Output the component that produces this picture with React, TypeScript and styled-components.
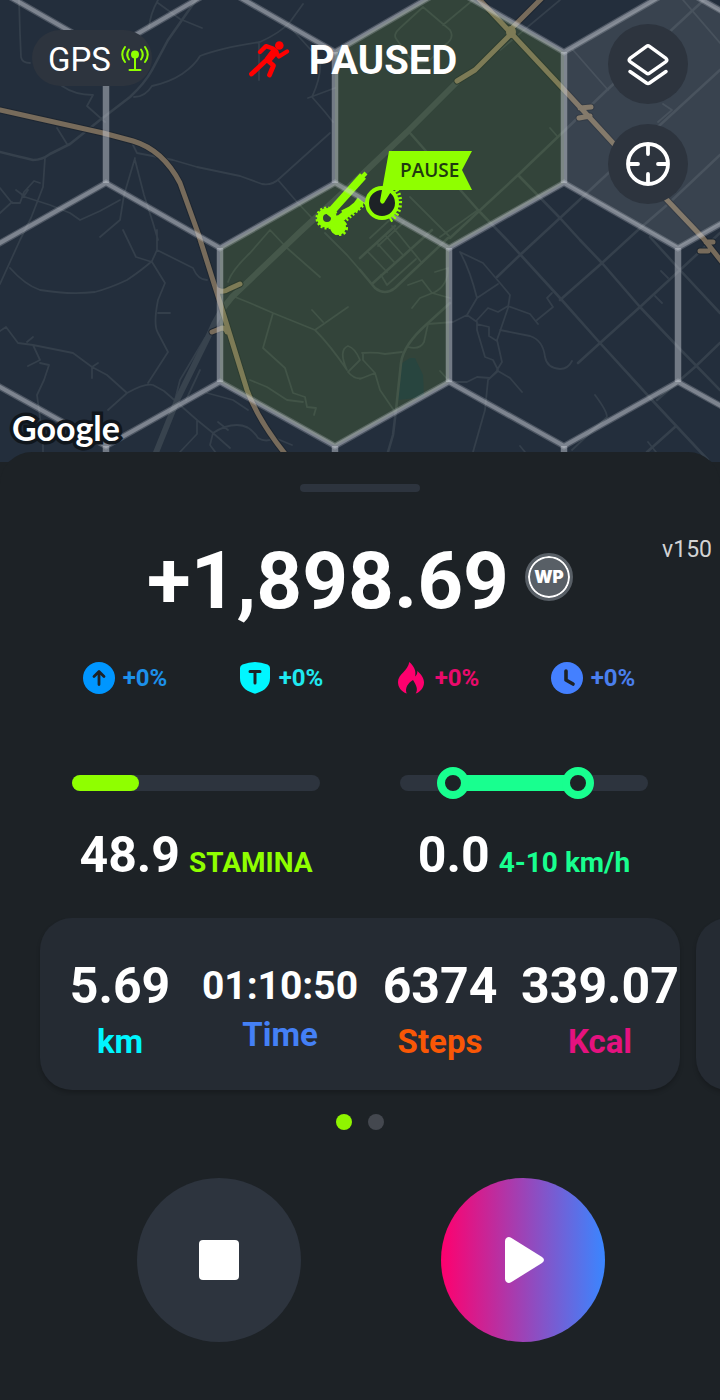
import { useState } from 'react';
import styled, { createGlobalStyle } from 'styled-components';

const HEX_SLOPES =
  'M-9 -14L106 52L220 -14L335 52L449 -14L564 52L678 -14L793 52' +
  'M-124 183L-9 248L106 183L220 248L335 183L449 248L564 183L678 248L793 183' +
  'M-124 446L-9 382L106 446L220 382L335 446L449 382L564 446L678 382L793 446';

const HEX_SIDES =
  'M106 52V183M335 52V183M564 52V183' +
  'M220 248V382M449 248V382M678 248V382' +
  'M106 446V480M335 446V480M564 446V480';

const MINOR_ROADS = [
  'M19 0L20 33L21 57Q22 63 30 63',
  'M45 158L43 187L31 218L20 240L10 262L0 284',
  'M158 0Q150 14 149 28M158 3L180 19L202 28',
  'M134 97Q145 97 152 86Q170 82 182 74Q195 65 200 56Q220 48 260 42Q280 33 290 22L303 4',
  'M290 27L320 60Q322 75 312 97L325 112L333 122M259 42V80M308 98L335 88',
  'M62 86Q75 95 93 95L87 106L105 122M57 128L67 144',
  'M133 145L137 153L173 160L197 167L240 176L262 184Q272 186 280 178L330 133',
  'M278 180L297 202L312 218',
  'M135 158L124 195L120 220L100 237M135 160L144 195L153 223L158 240',
  'M0 188L12 203L20 203L24 192L34 181L40 183M16 190L24 196L28 190',
  'M22 196L50 205L70 213L80 220L100 211L120 200M0 213L12 202',
  'M10 268Q25 285 40 290Q70 295 95 292Q110 288 127 280Q142 270 152 261',
  'M123 230L136 257L152 262L165 283L158 300Q153 325 158 333L168 352L148 383',
  'M157 230V250L152 261M157 250L177 260L193 268Q198 280 207 280M158 313H170',
  'M0 331L6 327L18 343L33 345L73 353L92 367L107 375L127 393M92 378V367L98 363',
  'M33 345L40 360L28 366M40 363L49 365L44 380L37 395L43 440V455M27 342L33 337',
  'M108 410L127 393Q145 383 153 385L164 391L180 405L197 420L213 433L230 448',
  'M197 420V434L180 452M213 433Q225 425 237 425Q250 425 258 438Q266 443 275 438L292 445',
  'M213 433L210 445L216 453M218 422L228 430M205 338L180 380L175 400M200 370L186 400',
  'M207 393L233 400L248 410',
  'M235 297L250 303L273 313L315 330Q330 345 347 370',
  'M273 313L263 348L285 368L293 393L305 397L307 407L316 408L314 415',
  'M250 380L267 387L287 400L303 402M315 330L348 307M312 310L323 322',
  'M228 282Q232 270 250 253L270 230L287 248L320 277M325 233L347 255L360 270',
  'M347 370Q338 350 348 346Q355 348 360 360L348 372Q355 380 362 378',
  'M408 285L422 280L432 293L450 298M412 308L420 298L435 292Q448 285 448 268L435 272',
  'M428 324L453 322L467 315L477 322V330L485 357L493 360L498 370L488 380L485 410L473 452',
  'M460 252Q470 270 477 298L467 315M477 298L498 284',
  'M460 252L483 263L500 283L510 295L508 308L497 340L502 362L497 370',
  'M477 320L488 308L498 312L508 306L530 314L538 324M477 324L489 327V336L497 341',
  'M500 330L530 336Q543 340 545 357Q547 368 560 369Q568 369 572 361',
  'M440 371L450 382L467 382L477 377L490 378L498 371L510 378L522 392',
  'M362 353Q375 352 385 354L402 352M363 353V360L375 373L380 390L395 412M360 379L375 373',
  'M572 450L607 417Q607 411 595 395M537 320L553 307L547 298L552 293',
  'M428 324L424 342Q420 350 408 347M550 128L557 136M661 271L668 278M655 296L662 303',
  'M423 7L450 30Q455 38 445 45L430 60Q420 66 410 58L397 40Q392 35 400 28L423 7M443 25L473 0',
  'M410 197L450 237M440 237L478 210M573 50L608 90M683 0L720 43M663 104L672 110L658 122',
  'M368 252L387 272M377 243L395 263M385 235L403 255M392 226L422 263M381 275L387 285L416 259',
  'M370 238L395 215M378 246L404 222M648 442L656 452M520 446L525 452M500 50L560 0',
];

const GRID_ROADS = [
  'M0 152Q20 157 33 160Q42 160 50 154L70 144L100 120L130 97Q145 83 152 70L168 40L196 0',
  'M410 133L478 210L507 240L560 298L600 343L652 400L708 460',
  'M518 175L560 218L580 240L602 263L640 307L678 347L720 390',
  'M650 237L680 270L720 313',
  'M450 238L518 175L607 90L693 10L704 0',
  'M497 277L520 255L560 218L660 125L720 70',
  'M560 300L602 263L638 230L667 205L720 155',
  'M578 363L600 343L640 307L680 270L720 233M657 400L695 367L720 343M647 452L675 427',
  'M360 270L375 288Q385 296 395 288L448 238M373 283L432 230M360 258L395 226',
  'M450 303L428 323Q403 345 401 363L396 410L393 435L388 452',
];

const HIGHWAYS = [
  'M0 110L103 133L133 141Q163 150 180 183Q188 205 198 233L217 293L247 390Q258 420 286 455',
  'M478 -2L510 32L567 93L613 143L667 200L703 238L722 262',
  'M543 -3L510 30M510 35L475 70L457 81M580 108L591 107M579 118L590 116M700 251H708M706 242H713',
  'M218 290Q223 293 229 289L240 284M212 332L222 328Q226 328 227 332',
];

const MapArt = () => (
  <MapSvg viewBox="0 0 720 462" preserveAspectRatio="xMidYMin slice" aria-hidden="true">
    <rect x="-400" y="-20" width="1600" height="520" fill="#232e3c" />
    <g fill="none" strokeLinecap="round" strokeLinejoin="round">
      <path d="M402 363L410 358H415L423 375L424 397L398 400Z" fill="#172f42" />
      <path d={MINOR_ROADS.join('')} stroke="#343f4b" strokeWidth="1.8" />
      <path d={GRID_ROADS.join('')} stroke="#35404c" strokeWidth="2.6" />
      <path
        d="M155 455L178 398L210 333Q218 313 232 297L300 232L350 186L407 132L457 82"
        stroke="#38434e"
        strokeWidth="6"
      />
      <path d={HIGHWAYS.join('')} stroke="#1d2631" strokeWidth="7" />
      <path d={HIGHWAYS.join('')} stroke="#776b5b" strokeWidth="5" />
      <ellipse cx="511" cy="32" rx="5" ry="6" fill="#776b5b" />
    </g>
    <g fill="rgba(180, 255, 50, 0.11)">
      <path d="M335 52L449 -14L564 52V183L449 248L335 183Z" />
      <path d="M220 248L335 183L449 248V382L335 446L220 382Z" />
    </g>
    <path d="M564 52L678 -14L793 52V183L678 248L564 183Z" fill="rgba(255, 255, 255, 0.1)" />
    <g fill="none" stroke="#8fff00">
      <path d="M363 176L328 215" strokeWidth="8" />
      <path d="M366 173L327 214" strokeWidth="4" />
      <path d="M361 202L331 226M361 200L355 208L343 214" strokeWidth="8" />
      <path d="M366 203L342 224" strokeWidth="3" strokeDasharray="2 2" />
      <circle cx="327" cy="218" r="7" strokeWidth="6" />
      <circle cx="327" cy="218" r="10" strokeWidth="3" strokeDasharray="2 2" />
      <circle cx="338" cy="227" r="4" strokeWidth="8" />
      <circle cx="340" cy="228" r="6" strokeWidth="4" strokeDasharray="2 2" />
    </g>
    <g fill="none" stroke="#cdd0d8">
      <path d={HEX_SLOPES} strokeWidth="6.5" opacity="0.25" />
      <path d={HEX_SLOPES} strokeWidth="4" opacity="0.38" />
      <path d={HEX_SIDES} strokeWidth="6.5" opacity="0.47" />
    </g>
    <path
      d="M396 190Q401 197 399 208Q397 216 390 220"
      fill="none"
      stroke="#8fff00"
      strokeWidth="5"
      strokeDasharray="2 2"
    />
    <circle cx="382" cy="203" r="15" fill="#1d2226" stroke="#8fff00" strokeWidth="4" />
    <path d="M389 151H472L462 170L472 190H392L384 203Q381 205 380 201L382 190Z" fill="#8fff00" />
    <FlagText x="400" y="177">
      PAUSE
    </FlagText>
  </MapSvg>
);

const AntennaIcon = () => (
  <svg width="28" height="28" viewBox="0 0 28 28" fill="none" stroke="#8fff00" strokeWidth="2">
    <circle cx="14" cy="9.5" r="4" fill="#8fff00" stroke="none" />
    <path d="M14 10V25M8.5 25H19.5" strokeLinecap="round" />
    <path d="M8 4.5Q4.5 9.5 8 14.5M20 4.5Q23.5 9.5 20 14.5" strokeLinecap="round" />
    <path d="M4 2Q-1.5 9.5 4 17M24 2Q29.5 9.5 24 17" strokeLinecap="round" />
  </svg>
);

const RunnerIcon = () => (
  <svg width="42" height="38" viewBox="0 0 42 38" fill="none" stroke="#ff0000" strokeWidth="4.8">
    <circle cx="30.3" cy="4.5" r="4.3" fill="#ff0000" stroke="none" />
    <g strokeLinecap="round" strokeLinejoin="round">
      <path d="M11 11L17 5.2L24 7.5L30 15.5L38 10.5" strokeWidth="4.4" />
      <path d="M25 9L17.5 19L2.5 33" />
      <path d="M18 19L24.5 24.5L20.5 34" />
      <path d="M26 11L20 18" strokeWidth="7" />
    </g>
  </svg>
);

const LayersIcon = () => (
  <svg width="44" height="44" viewBox="0 0 44 44" fill="none" stroke="#fff" strokeWidth="3.4">
    <g strokeLinecap="round" strokeLinejoin="round">
      <path d="M20.5 4.3Q22 3.2 23.5 4.3L40 16.4Q41.6 18 40 19.6L23.5 31.2Q22 32.4 20.5 31.2L4 19.6Q2.4 18 4 16.4Z" />
      <path d="M4 29.5L20.5 41Q22 42 23.5 41L40 29.5" />
    </g>
  </svg>
);

const CrosshairIcon = () => (
  <svg width="44" height="44" viewBox="0 0 44 44" fill="none" stroke="#fff" strokeWidth="3.8">
    <circle cx="22" cy="22" r="20" />
    <path d="M22 3V12M22 32V41M3 22H12M32 22H41" strokeLinecap="round" />
  </svg>
);

const ArrowIcon = () => (
  <svg width="32" height="32" viewBox="0 0 32 32">
    <circle cx="16" cy="16" r="16" fill="#0096ff" />
    <path
      d="M16 22.5V10M11 14.5L16 9.5L21 14.5"
      fill="none"
      stroke="#1d2226"
      strokeWidth="2.8"
      strokeLinecap="round"
      strokeLinejoin="round"
    />
  </svg>
);

const ShieldIcon = () => (
  <svg width="32" height="32" viewBox="0 0 32 32">
    <path
      d="M16 0Q22 .3 28.5 2.5Q31 3.5 31 6V16Q31 27 17.5 31.3Q16 32 14.5 31.3Q1 27 1 16V6Q1 3.5 3.5 2.5Q10 .3 16 0Z"
      fill="#00f6ff"
    />
    <path
      d="M11 9.5H21M16 9.5V21"
      fill="none"
      stroke="#1d2226"
      strokeWidth="3"
      strokeLinecap="round"
    />
  </svg>
);

const FlameIcon = () => (
  <svg width="32" height="32" viewBox="0 0 32 32">
    <path
      d="M14.3 0C19 4 21.5 9 20 14.5C22 13 22.5 11 22.3 9C26 12 29 16 29 20.5C29 26 25 30 20.7 31.6C23.5 27 21 23 18 18C13 21 9.5 26 11.7 31.6C6 29.5 3 25 3 20C3 12 13 9 14.3 0Z"
      fill="#ff006e"
    />
  </svg>
);

const ClockIcon = () => (
  <svg width="32" height="32" viewBox="0 0 32 32">
    <circle cx="16" cy="16" r="16" fill="#4480ff" />
    <path
      d="M15 9V18L22 22"
      fill="none"
      stroke="#1d2226"
      strokeWidth="3.6"
      strokeLinecap="round"
      strokeLinejoin="round"
    />
  </svg>
);

const BOOSTS = [
  { name: 'Level boost', color: '#1c90ea', Icon: ArrowIcon },
  { name: 'Token boost', color: '#1fe9f0', Icon: ShieldIcon },
  { name: 'Energy boost', color: '#ea0a6c', Icon: FlameIcon },
  { name: 'Time boost', color: '#4a7fee', Icon: ClockIcon },
];

const STATS = [
  { label: 'km', value: '5.69', color: '#00f6ff' },
  { label: 'Time', value: '01:10:50', color: '#4480f6', small: true },
  { label: 'Steps', value: '6374', color: '#f95706' },
  { label: 'Kcal', value: '339.07', color: '#e5127f' },
];

const SPEED_MIN = 2.2;
const SPEED_MAX = 12.6;

const SpeedRange = () => {
  const [low, setLow] = useState(4);
  const [high, setHigh] = useState(10);

  const toPercent = (speed: number) => ((speed - SPEED_MIN) / (SPEED_MAX - SPEED_MIN)) * 100;

  return (
    <Gauge>
      <TrackBox>
        <Track>
          <RangeInset>
            <RangeFill
              style={{
                marginLeft: `${toPercent(low)}%`,
                width: `${toPercent(high) - toPercent(low)}%`,
              }}
            />
          </RangeInset>
        </Track>
        <RangeInput
          type="range"
          aria-label="Lowest speed"
          min={SPEED_MIN}
          max={SPEED_MAX}
          step={0.1}
          value={low}
          onChange={(e) => setLow(Math.min(Number(e.target.value), high))}
        />
        <RangeInput
          type="range"
          aria-label="Highest speed"
          min={SPEED_MIN}
          max={SPEED_MAX}
          step={0.1}
          value={high}
          onChange={(e) => setHigh(Math.max(Number(e.target.value), low))}
        />
      </TrackBox>
      <GaugeText>
        <BigValue>0.0</BigValue>
        <GaugeUnit color="#18ff8f">
          {low}-{high} km/h
        </GaugeUnit>
      </GaugeText>
    </Gauge>
  );
};

const App = () => {
  return (
    <>
      <GlobalStyle />
      <MapSection>
        <MapArt />
        <Header>
          <GpsPill>
            GPS
            <AntennaIcon />
          </GpsPill>
          <Title>
            <RunnerIcon />
            PAUSED
          </Title>
          <MapButtons>
            <MapButton aria-label="Map layers">
              <LayersIcon />
            </MapButton>
            <MapButton aria-label="My location">
              <CrosshairIcon />
            </MapButton>
          </MapButtons>
        </Header>
        <MapBrand>Google</MapBrand>
      </MapSection>
      <Sheet>
        <SheetHandle />
        <ScoreRow>
          <Score>
            +1,898.69
            <Badge>WP</Badge>
          </Score>
          <Version>v150</Version>
        </ScoreRow>
        <BoostRow>
          {BOOSTS.map(({ name, color, Icon }) => (
            <Boost key={name} color={color} aria-label={name}>
              <Icon />
              +0%
            </Boost>
          ))}
        </BoostRow>
        <GaugeRow>
          <Gauge>
            <TrackBox>
              <Track role="progressbar" aria-label="Stamina" aria-valuenow={27}>
                <StaminaFill style={{ width: '27%' }} />
              </Track>
            </TrackBox>
            <GaugeText>
              <BigValue>48.9</BigValue>
              <GaugeUnit color="#8fff00">STAMINA</GaugeUnit>
            </GaugeText>
          </Gauge>
          <SpeedRange />
        </GaugeRow>
        <Carousel>
          <StatCard>
            {STATS.map(({ label, value, color, small }) => (
              <Stat key={label}>
                <StatValue small={small}>{value}</StatValue>
                <StatLabel color={color}>{label}</StatLabel>
              </Stat>
            ))}
          </StatCard>
          <StatCard />
        </Carousel>
        <Dots>
          <Dot active aria-label="Page 1" />
          <Dot aria-label="Page 2" />
        </Dots>
        <Controls>
          <RoundButton aria-label="Stop">
            <svg width="40" height="40" viewBox="0 0 40 40">
              <rect width="40" height="40" rx="4" fill="#fff" />
            </svg>
          </RoundButton>
          <RoundButton primary aria-label="Resume">
            <svg width="46" height="46" viewBox="0 0 46 46">
              <path
                d="M5 4Q5 1.5 7 .5Q9 -.5 11.5 1L42 20Q44 21.5 44 23Q44 24.5 42 26L11.5 45Q9 46.5 7 45.5Q5 44.5 5 42Z"
                fill="#fff"
              />
            </svg>
          </RoundButton>
        </Controls>
      </Sheet>
    </>
  );
};

export default App;

const GlobalStyle = createGlobalStyle`
  * {
    box-sizing: border-box;
  }

  body {
    margin: 0;
    background-color: #1d2226;
    color: #fff;
    font-family: Roboto, sans-serif;
  }

  button {
    padding: 0;
    border: none;
    font: inherit;
    color: inherit;
    cursor: pointer;
  }

  svg {
    display: block;
    flex: none;
  }
`;

const MapSection = styled.section`
  position: relative;
  min-height: 462px;
  display: flex;
  flex-direction: column;
  justify-content: space-between;
  overflow: hidden;
`;

const MapSvg = styled.svg`
  position: absolute;
  inset: 0;
  width: 100%;
  height: 100%;
`;

const FlagText = styled.text`
  font-family: 'Open Sans', sans-serif;
  font-size: 19px;
  font-weight: 600;
  fill: #1f3a10;
`;

const Header = styled.header`
  position: relative;
  display: grid;
  grid-template-columns: 1fr auto 1fr;
  align-items: start;
  padding: 24px 32px;
`;

const GpsPill = styled.div`
  justify-self: start;
  display: flex;
  align-items: center;
  gap: 10px;
  height: 56px;
  margin-top: 6px;
  padding: 2px 3px 0 16px;
  border-radius: 28px;
  background-color: #2d343e;
  font-size: 33px;
`;

const Title = styled.h1`
  display: flex;
  align-items: center;
  gap: 18px;
  height: 72px;
  margin: 0;
  padding-right: 14px;
  font-size: 40px;
  font-weight: 700;
`;

const MapButtons = styled.div`
  justify-self: end;
  display: flex;
  flex-direction: column;
  gap: 20px;
`;

const MapButton = styled.button`
  display: flex;
  align-items: center;
  justify-content: center;
  width: 80px;
  height: 80px;
  border-radius: 50%;
  background-color: #2d343e;
`;

const MapBrand = styled.span`
  position: relative;
  padding: 0 12px 12px;
  font-family: Lato, sans-serif;
  font-size: 34px;
  font-weight: 700;
  line-height: 44px;
  -webkit-text-stroke: 7px #10161c;
  paint-order: stroke fill;
`;

const Sheet = styled.main`
  position: relative;
  margin-top: -10px;
  padding: 32px 0 58px;
  border-radius: 32px 32px 0 0;
  background-color: #1d2226;
`;

const SheetHandle = styled.div`
  width: 120px;
  height: 8px;
  margin: 0 auto;
  border-radius: 4px;
  background-color: #2d343e;
`;

const ScoreRow = styled.div`
  display: grid;
  grid-template-columns: 1fr auto 1fr;
  margin-top: 42px;
  padding: 0 8px;
`;

const Score = styled.div`
  grid-column: 2;
  display: flex;
  align-items: center;
  gap: 16px;
  font-size: 80px;
  font-weight: 700;
  line-height: 94px;
`;

const Badge = styled.span`
  display: flex;
  align-items: center;
  justify-content: center;
  width: 48px;
  height: 48px;
  margin-bottom: 8px;
  border: 3px solid #585f66;
  border-radius: 50%;
  background-color: #585f66;
  box-shadow: inset 0 0 0 2px #fff;
  font-family: Inter, sans-serif;
  font-size: 17px;
  font-weight: 900;
  line-height: 20px;
`;

const Version = styled.span`
  justify-self: end;
  color: #d2d3d4;
  font-size: 23px;
  line-height: 32px;
`;

const BoostRow = styled.ul`
  display: grid;
  grid-template-columns: repeat(4, 1fr);
  margin: 34px 0 0;
  padding: 0 49px 0 47px;
  list-style: none;
`;

const Boost = styled.li<{ color: string }>`
  display: flex;
  align-items: center;
  justify-content: center;
  gap: 8px;
  color: ${(props) => props.color};
  font-size: 24px;
  font-weight: 700;
  line-height: 32px;
`;

const GaugeRow = styled.div`
  display: grid;
  grid-template-columns: 1fr 1fr;
  gap: 80px;
  margin-top: 73px;
  padding: 0 72px;
`;

const Gauge = styled.div`
  display: flex;
  flex-direction: column;
  gap: 27px;
`;

const TrackBox = styled.div`
  position: relative;
  display: flex;
  align-items: center;
  height: 32px;
`;

const Track = styled.div`
  width: 100%;
  height: 16px;
  border-radius: 8px;
  background-color: #2d343e;
`;

const StaminaFill = styled.div`
  height: 16px;
  border-radius: 8px;
  background-color: #8fff00;
`;

const RangeInset = styled.div`
  padding: 0 16px;
`;

const RangeFill = styled.div`
  height: 16px;
  background-color: #18ff8f;
`;

const RangeInput = styled.input`
  position: absolute;
  inset: 0;
  width: 100%;
  height: 32px;
  margin: 0;
  appearance: none;
  background: transparent;
  pointer-events: none;

  &::-webkit-slider-thumb {
    appearance: none;
    width: 32px;
    height: 32px;
    border: 8px solid #18ff8f;
    border-radius: 50%;
    background-color: #1d2226;
    pointer-events: auto;
  }
`;

const GaugeText = styled.div`
  display: flex;
  align-items: baseline;
  justify-content: center;
  gap: 9px;
`;

const BigValue = styled.span`
  font-size: 50px;
  font-weight: 700;
  line-height: 58px;
`;

const GaugeUnit = styled.span<{ color: string }>`
  color: ${(props) => props.color};
  font-size: 28px;
  font-weight: 700;
`;

const Carousel = styled.div`
  display: flex;
  gap: 16px;
  margin-top: 34px;
  margin-bottom: -6px;
  padding: 0 40px 6px;
  overflow: hidden;
`;

const StatCard = styled.div`
  flex: 0 0 100%;
  display: grid;
  grid-template-columns: repeat(4, minmax(0, 1fr));
  align-items: center;
  padding: 39px 0 29px;
  border-radius: 32px;
  background-color: #252b33;
  box-shadow: 0 3px 4px rgba(0, 0, 0, 0.2);
`;

const Stat = styled.div`
  display: flex;
  flex-direction: column;
  align-items: center;
  gap: 8px;
`;

const StatValue = styled.span<{ small?: boolean }>`
  font-size: ${(props) => (props.small ? 39 : 50)}px;
  font-weight: 700;
  line-height: ${(props) => (props.small ? 44 : 58)}px;
`;

const StatLabel = styled.span<{ color: string }>`
  color: ${(props) => props.color};
  font-size: 33px;
  font-weight: 700;
  line-height: 38px;
`;

const Dots = styled.div`
  display: flex;
  justify-content: center;
  gap: 16px;
  margin-top: 24px;
`;

const Dot = styled.button<{ active?: boolean }>`
  width: 16px;
  height: 16px;
  border-radius: 50%;
  background-color: ${(props) => (props.active ? '#8ff500' : '#44484f')};
`;

const Controls = styled.div`
  display: flex;
  justify-content: space-between;
  margin-top: 48px;
  padding: 0 16% 0 19%;
`;

const RoundButton = styled.button<{ primary?: boolean }>`
  display: flex;
  align-items: center;
  justify-content: center;
  width: 164px;
  height: 164px;
  border-radius: 50%;
  background: ${(props) =>
    props.primary ? 'linear-gradient(90deg, #ff006e, #3a86ff)' : '#2d343e'};
`;
